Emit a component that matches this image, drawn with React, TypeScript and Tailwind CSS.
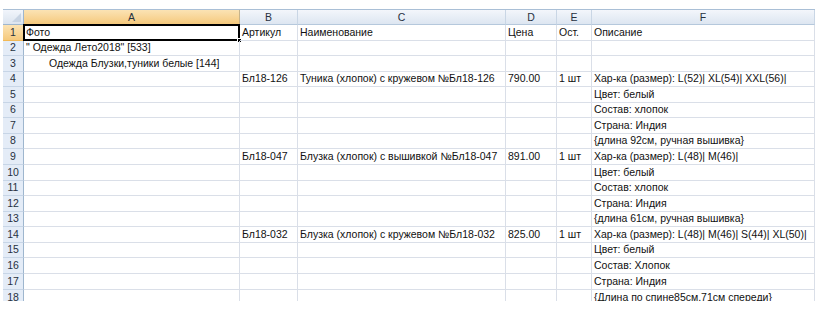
import React from "react";

const cols = [
  { key: "A", w: 216 },
  { key: "B", w: 58 },
  { key: "C", w: 208 },
  { key: "D", w: 51 },
  { key: "E", w: 35 },
  { key: "F", w: 223 },
];

const heights = [16, 15, 16, 15, 16, 15, 16, 15, 16, 16, 15, 16, 15, 16, 15, 16, 16, 16];

type Row = { A?: string; B?: string; C?: string; D?: string; E?: string; F?: string; indent?: boolean };

const rows: Row[] = [
  { A: "Фото", B: "Артикул", C: "Наименование", D: "Цена", E: "Ост.", F: "Описание" },
  { A: "\" Одежда Лето2018\" [533]" },
  { A: "Одежда Блузки,туники белые [144]", indent: true },
  { B: "Бл18-126", C: "Туника (хлопок) с кружевом №Бл18-126", D: "790.00", E: "1 шт", F: "Хар-ка (размер): L(52)| XL(54)| XXL(56)|" },
  { F: "Цвет: белый" },
  { F: "Состав: хлопок" },
  { F: "Страна: Индия" },
  { F: "{длина 92см, ручная вышивка}" },
  { B: "Бл18-047", C: "Блузка (хлопок) с вышивкой №Бл18-047", D: "891.00", E: "1 шт", F: "Хар-ка (размер): L(48)| M(46)|" },
  { F: "Цвет: белый" },
  { F: "Состав: хлопок" },
  { F: "Страна: Индия" },
  { F: "{длина 61см, ручная вышивка}" },
  { B: "Бл18-032", C: "Блузка (хлопок) с кружевом №Бл18-032", D: "825.00", E: "1 шт", F: "Хар-ка (размер): L(48)| M(46)| S(44)| XL(50)|" },
  { F: "Цвет: белый" },
  { F: "Состав: Хлопок" },
  { F: "Страна: Индия" },
  { F: "{Длина по спине85см.71см спереди}" },
];

export default function App() {
  return (
    <div className="w-[823px] h-[316px] bg-white pt-[9px] pl-[3px] text-[10.5px] text-[#111]" style={{ fontFamily: '"Liberation Sans", Arial, sans-serif' }}>
      <div className="w-[812px] h-[292px] overflow-hidden">
        {/* column headers */}
        <div className="flex h-[16px] border-t border-[#a9bfd6]">
          <div className="relative w-[21px] shrink-0 bg-gradient-to-b from-[#f1f5fb] to-[#dbe4ef] border-r border-b border-[#9eb6ce]">
            <div className="absolute right-[2px] bottom-[2px] w-0 h-0 border-l-[9px] border-l-transparent border-b-[9px] border-b-[#c8d4e3]" />
          </div>
          {cols.map(c => (
            <div
              key={c.key}
              style={{ width: c.w }}
              className={`shrink-0 flex items-center justify-center border-r border-b leading-none ${
                c.key === "A"
                  ? "bg-gradient-to-b from-[#fbe3b4] to-[#f5c97c] border-[#f2b956] border-r-[#c5b38c]"
                  : "bg-gradient-to-b from-[#f3f6fb] to-[#dde6f1] border-[#b5c8dc] border-r-[#c9d6e5]"
              } text-[#27313f]`}
            >
              {c.key}
            </div>
          ))}
        </div>

        {/* data rows */}
        {rows.map((r, i) => (
          <div key={i} className="flex" style={{ height: heights[i] }}>
            <div
              className={`w-[21px] shrink-0 flex items-center justify-center border-r border-b ${
                i === 0
                  ? "bg-gradient-to-b from-[#fbe3b4] to-[#f5c97c] border-[#f2b956] border-r-[#f2b956]"
                  : "bg-[#e4ecf7] border-[#c7d5e6] border-r-[#9eb6ce]"
              } text-[#27313f]`}
            >
              {i + 1}
            </div>
            {cols.map(c => {
              const v = r[c.key as keyof Row] as string | undefined;
              const sel = i === 0 && c.key === "A";
              return (
                <div
                  key={c.key}
                  style={{ width: c.w }}
                  className={`relative shrink-0 border-r border-b border-[#dadfe8] flex items-end pb-[1px] whitespace-nowrap leading-[13px] ${
                    r.indent && c.key === "A" ? "pl-[25px]" : "pl-[2px]"
                  }`}
                >
                  {v}
                  {sel && (
                    <>
                      <div className="absolute -left-[1px] -top-[1px] -right-[1px] -bottom-[1px] border-2 border-black pointer-events-none" />
                      <div className="absolute -right-[3px] -bottom-[3px] w-[5px] h-[5px] bg-black border border-white" />
                    </>
                  )}
                </div>
              );
            })}
          </div>
        ))}
      </div>
    </div>
  );
}
